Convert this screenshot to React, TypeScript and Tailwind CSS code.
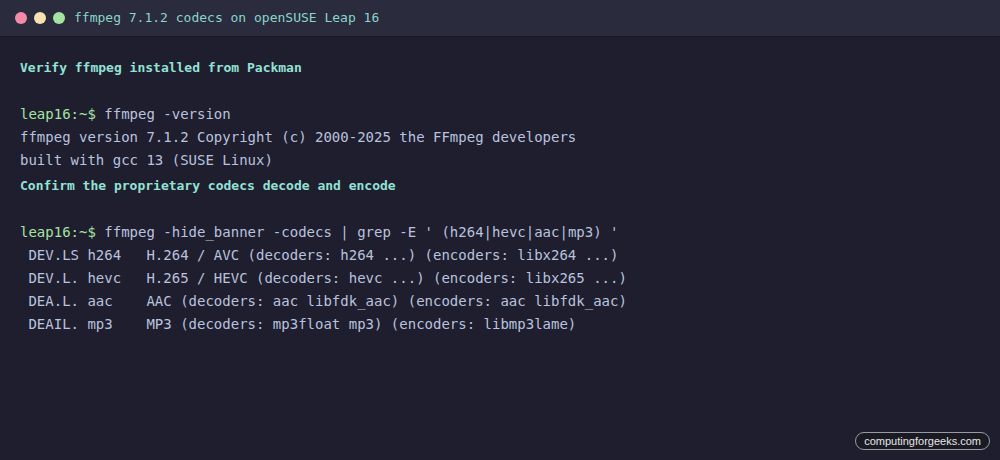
const mono = "font-['DejaVu_Sans_Mono','Liberation_Mono',monospace]"

function Heading({ children }: { children: string }) {
  return (
    <div className={`mt-[3px] h-[23px] leading-[22px] text-[13px] font-bold text-[#94e2d5] ${mono}`}>
      {children}
    </div>
  )
}

function Line({ children }: { children: React.ReactNode }) {
  return <div className="h-[23px] leading-[23px] whitespace-pre">{children}</div>
}

function Prompt({ cmd }: { cmd: string }) {
  return (
    <Line>
      <span className="text-[#a6e3a1]">leap16:~$</span> {cmd}
    </Line>
  )
}

export default function App() {
  return (
    <div className="w-[1000px] h-[460px] bg-[#1e1e2e] relative overflow-hidden">
      <div className="h-[37px] bg-[#2a2b3d] border-b border-[#181825] flex items-center pl-[15px] gap-[7px]">
        <span className="w-3 h-3 rounded-full bg-[#f38ba8]" />
        <span className="w-3 h-3 rounded-full bg-[#f9e2af]" />
        <span className="w-3 h-3 rounded-full bg-[#a6e3a1]" />
        <span className={`ml-[2px] text-[13px] text-[#8bd5ca] ${mono}`}>
          ffmpeg 7.1.2 codecs on openSUSE Leap 16
        </span>
      </div>

      <div className={`px-5 pt-[17px] text-[14px] text-[#bac2de] ${mono}`}>
        <Heading>Verify ffmpeg installed from Packman</Heading>
        <Line>{" "}</Line>
        <Prompt cmd="ffmpeg -version" />
        <Line>ffmpeg version 7.1.2 Copyright (c) 2000-2025 the FFmpeg developers</Line>
        <Line>built with gcc 13 (SUSE Linux)</Line>
        <Heading>Confirm the proprietary codecs decode and encode</Heading>
        <Line>{" "}</Line>
        <Prompt cmd="ffmpeg -hide_banner -codecs | grep -E ' (h264|hevc|aac|mp3) '" />
        <Line>{" DEV.LS h264   H.264 / AVC (decoders: h264 ...) (encoders: libx264 ...)"}</Line>
        <Line>{" DEV.L. hevc   H.265 / HEVC (decoders: hevc ...) (encoders: libx265 ...)"}</Line>
        <Line>{" DEA.L. aac    AAC (decoders: aac libfdk_aac) (encoders: aac libfdk_aac)"}</Line>
        <Line>{" DEAIL. mp3    MP3 (decoders: mp3float mp3) (encoders: libmp3lame)"}</Line>
      </div>

      <div className="absolute right-[10px] bottom-[10px] h-[18px] px-[8px] rounded-full border border-[#9a9aa6] bg-[#1a1a22] flex items-center text-[11px] text-[#e6e6ea] font-['Liberation_Sans',Arial,sans-serif]">
        computingforgeeks.com
      </div>
    </div>
  )
}
